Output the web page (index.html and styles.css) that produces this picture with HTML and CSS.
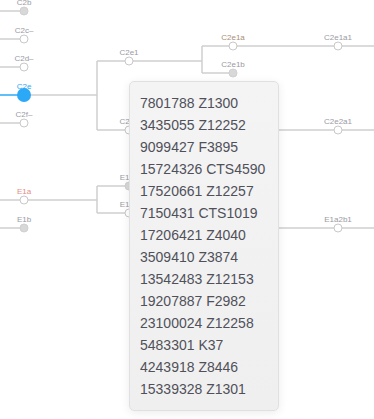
FILE: index.html
```html
<!DOCTYPE html>
<html lang="en">
<head>
  <meta charset="UTF-8">
  <meta name="viewport" content="width=device-width, initial-scale=1">
  <title>Haplogroup Tree</title>
  <link rel="stylesheet" href="styles.css">
</head>
<body>
  <!-- Tree canvas -->
  <div class="tree">
    <svg class="tree-svg" width="374" height="419" viewBox="0 0 374 419">
      <g class="links">
        <path d="M0 11H24"/>
        <path d="M0 39H24"/>
        <path d="M0 67H24"/>
        <path d="M0 123H24"/>
        <path d="M24 95H97M97 61V130M97 61H202M202 46V73M202 46H374M202 73H233M97 130H374"/>
        <path d="M0 200H97M97 186V213M97 186H129M97 213H129M0 228H24M278 228H374"/>
      </g>
      <path class="link-active" d="M0 95H24"/>

      <g class="nodes">
        <circle class="filled" cx="24" cy="11" r="4"/>
        <circle cx="24" cy="39" r="4"/>
        <circle cx="24" cy="67" r="4"/>
        <circle cx="24" cy="123" r="4"/>
        <circle cx="129" cy="61" r="4"/>
        <circle cx="233" cy="46" r="4"/>
        <circle cx="338" cy="46" r="4"/>
        <circle class="filled" cx="233" cy="73" r="4"/>
        <circle cx="129" cy="130" r="4"/>
        <circle cx="338" cy="130" r="4"/>
        <circle cx="24" cy="200" r="4"/>
        <circle class="filled" cx="24" cy="228" r="4"/>
        <circle class="filled" cx="129" cy="186" r="4"/>
        <circle cx="129" cy="213" r="4"/>
        <circle cx="338" cy="228" r="4"/>
      </g>
      <circle class="node-active" cx="24" cy="95" r="7"/>

      <g class="labels">
        <text x="24" y="5">C2b</text>
        <text x="24" y="33">C2c–</text>
        <text x="24" y="61">C2d–</text>
        <text class="label-active" x="24" y="89">C2e</text>
        <text x="24" y="117">C2f–</text>
        <text x="129" y="55">C2e1</text>
        <text class="label-warm" x="233" y="40">C2e1a</text>
        <text x="338" y="40">C2e1a1</text>
        <text x="233" y="67">C2e1b</text>
        <text x="129" y="124">C2e2</text>
        <text x="338" y="124">C2e2a1</text>
        <text class="label-red" x="24" y="194">E1a</text>
        <text x="24" y="222">E1b</text>
        <text x="129" y="180">E1a1</text>
        <text x="129" y="207">E1a2</text>
        <text x="338" y="222">E1a2b1</text>
      </g>
    </svg>

    <!-- SNP tooltip -->
    <div class="tooltip">
      <ul class="snp-list">
        <li>7801788 Z1300</li>
        <li>3435055 Z12252</li>
        <li>9099427 F3895</li>
        <li>15724326 CTS4590</li>
        <li>17520661 Z12257</li>
        <li>7150431 CTS1019</li>
        <li>17206421 Z4040</li>
        <li>3509410 Z3874</li>
        <li>13542483 Z12153</li>
        <li>19207887 F2982</li>
        <li>23100024 Z12258</li>
        <li>5483301 K37</li>
        <li>4243918 Z8446</li>
        <li>15339328 Z1301</li>
      </ul>
    </div>
  </div>
</body>
</html>
```

FILE: styles.css
```css
/* General Reset */
* {
  margin: 0;
  padding: 0;
  box-sizing: border-box;
}

body {
  font-family: "Liberation Sans", Arial, sans-serif;
  background-color: #fff;
  color: #333;
  overflow: hidden;
}

/* Tree canvas */
.tree {
  position: relative;
  width: 374px;
  height: 419px;
}

.tree-svg {
  display: block;
}

.links path {
  fill: none;
  stroke: #cfcfcf;
  stroke-width: 1.5;
}

.link-active {
  fill: none;
  stroke: #2ba8f6;
  stroke-width: 1.5;
}

.nodes circle {
  fill: #fff;
  stroke: #c8c8c8;
  stroke-width: 1;
}

.nodes circle.filled {
  fill: #d8d8d8;
  stroke: #d0d0d0;
}

.node-active {
  fill: #2ba8f6;
}

.labels text {
  font-family: "Liberation Sans", Arial, sans-serif;
  font-size: 8px;
  fill: #9a9aa4;
  text-anchor: middle;
}

.labels .label-active {
  fill: #2ba8f6;
}

.labels .label-warm {
  fill: #a88f78;
}

.labels .label-red {
  fill: #df8c88;
}

/* Tooltip over the tree */
.tooltip {
  position: absolute;
  left: 129px;
  top: 81px;
  width: 150px;
  height: 330px;
  padding: 10px 10px;
  background: linear-gradient(#f4f4f4, #efefef);
  border: 1px solid #e0e0e0;
  border-radius: 5px;
  box-shadow: 0 2px 10px rgba(0, 0, 0, 0.08);
}

.snp-list {
  list-style: none;
}

.snp-list li {
  font-size: 14px;
  line-height: 22px;
  color: #50505a;
  white-space: nowrap;
}
```
